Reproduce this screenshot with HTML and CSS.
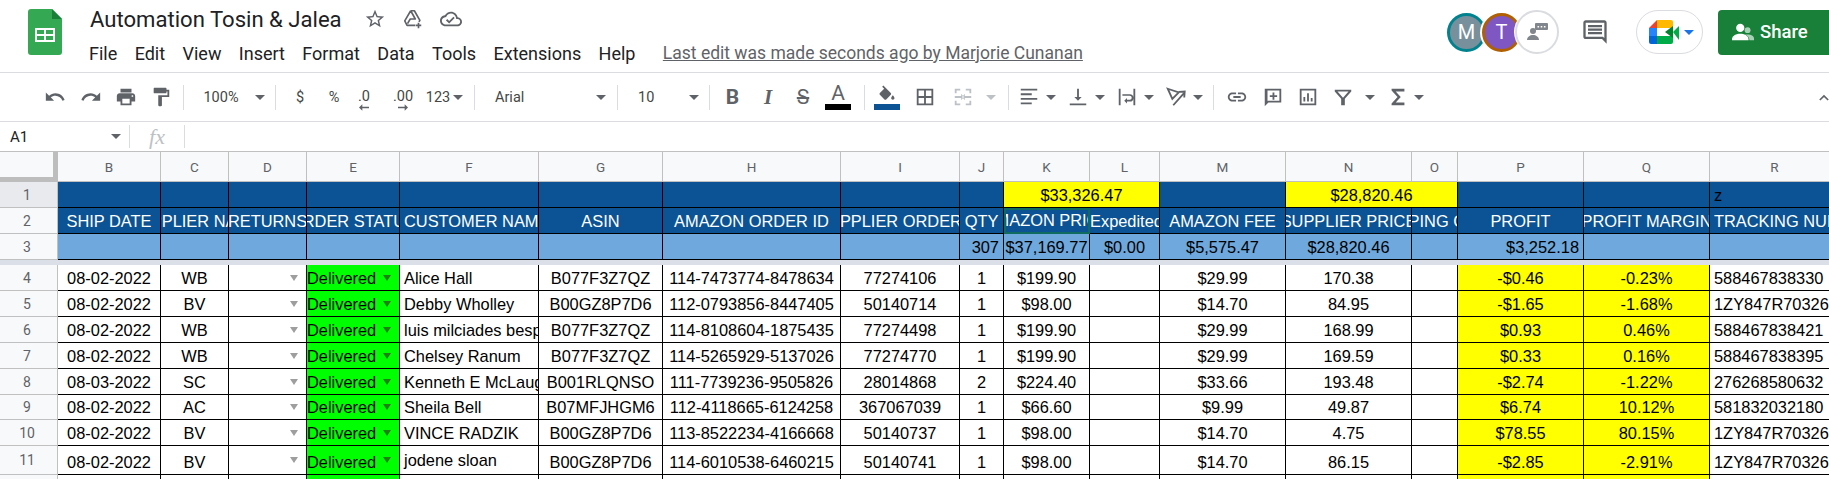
FILE: index.html
```html
<!DOCTYPE html>
<html lang="en">
<head>
<meta charset="utf-8">
<title>Automation Tosin &amp; Jalea</title>
<link rel="stylesheet" href="styles.css">
</head>
<body>
<header class="topbar">
  <svg class="logo" viewBox="0 0 34 46"><path d="M3 0h21l10 10v33a3 3 0 0 1-3 3H3a3 3 0 0 1-3-3V3a3 3 0 0 1 3-3z" fill="#34a853"/><path d="M24 0l10 10H24z" fill="#188038"/><path d="M7 19h20v14H7zM9 21v4h7v-4zm9 0v4h7v-4zM9 27v4h7v-4zm9 0v4h7v-4z" fill="#fff" fill-rule="evenodd"/></svg>
  <div class="doc">
    <div class="titlerow">
      <span class="title">Automation Tosin &amp; Jalea</span>
      <svg class="ti star" viewBox="0 0 24 24"><path d="M22 9.24l-7.19-.62L12 2 9.19 8.63 2 9.24l5.46 4.73L5.82 21 12 17.27 18.18 21l-1.63-7.03L22 9.24zM12 15.4l-3.76 2.27 1-4.28-3.32-2.88 4.38-.38L12 6.1l1.71 4.04 4.38.38-3.32 2.88 1 4.28L12 15.4z"/></svg>
      <svg class="ti drive" viewBox="0 0 24 24"><path d="M9.500 3h4l6 10.500-1 1.700M9.500 3L3 14l2.500 5h9M9.500 3l5 9H9l-3 5" fill="none" stroke="#5f6368" stroke-width="1.8" stroke-linejoin="round"/><path d="M18 16v6M15 19h6" fill="none" stroke="#5f6368" stroke-width="1.8"/></svg>
      <svg class="ti cloud" viewBox="0 0 24 24"><path d="M19.35 10.04C18.67 6.59 15.64 4 12 4 9.11 4 6.6 5.64 5.35 8.04 2.34 8.36 0 10.91 0 14c0 3.31 2.69 6 6 6h13c2.76 0 5-2.24 5-5 0-2.64-2.05-4.78-4.65-4.96zM19 18H6c-2.21 0-4-1.79-4-4 0-2.05 1.53-3.76 3.56-3.97l1.07-.11.5-.95C8.08 7.14 9.94 6 12 6c2.62 0 4.88 1.86 5.39 4.43l.3 1.5 1.53.11c1.56.1 2.78 1.41 2.78 2.96 0 1.65-1.35 3-3 3zm-9-3.82l-2.09-2.09L6.5 13.5 10 17l6.01-6.01-1.41-1.41z"/></svg>
    </div>
    <nav class="menu">
      <span>File</span><span>Edit</span><span>View</span><span>Insert</span><span>Format</span><span>Data</span><span>Tools</span><span>Extensions</span><span>Help</span>
      <a class="lastedit">Last edit was made seconds ago by Marjorie Cunanan</a>
    </nav>
  </div>
  <div class="actions">
    <span class="avatar av-m">M</span>
    <span class="avatar av-t">T</span>
    <span class="avatar av-x"><svg viewBox="0 0 24 24" class="av-ic"><circle cx="8" cy="11" r="3" fill="#80868b"/><path d="M2 20c0-3 3-5 6-5s6 2 6 5z" fill="#80868b"/><rect x="10" y="3" width="13" height="7" rx="1" fill="#80868b"/><path d="M12.5 6h1.6v1.4h-1.6zM15.7 6h1.6v1.4h-1.6zM18.9 6h1.6v1.4h-1.6z" fill="#fff"/></svg></span>
    <svg class="chat" viewBox="0 0 24 24"><path d="M21.99 4c0-1.1-.89-2-1.99-2H4c-1.1 0-2 .9-2 2v12c0 1.1.9 2 2 2h14l4 4-.01-18zM20 4v13.17L18.83 16H4V4h16zM6 12h12v2H6zm0-3h12v2H6zm0-3h12v2H6z"/></svg>
    <span class="meet">
      <svg class="meet-ic" viewBox="0 0 30 24"><path d="M8 0L0 8h8z" fill="#ea4335"/><path d="M8 0h14a2 2 0 0 1 2 2v6H8z" fill="#ffba00"/><path d="M0 8h8v8H0z" fill="#2684fc"/><path d="M0 16h8v8H2a2 2 0 0 1-2-2z" fill="#0066da"/><path d="M8 16h16v6a2 2 0 0 1-2 2H8z" fill="#00ac47"/><path d="M24 12l6-6v14z" fill="#00ac47"/><path d="M16 12l8-6v12z" fill="#00832d"/></svg>
      <i class="meet-arrow"></i>
    </span>
    <span class="share"><svg class="share-ic" viewBox="0 0 24 24"><circle cx="9" cy="7.5" r="4.5" fill="#fff"/><path d="M0 20c0-4 5-6 9-6s9 2 9 6v1H0z" fill="#fff"/><circle cx="17" cy="10" r="3.2" fill="#a6d3b4"/><path d="M14 15c4-1 10 0 10 4v2h-5c0-3-2-5-5-6z" fill="#a6d3b4"/></svg>Share</span>
  </div>
</header>

<div class="toolbar">
  <span class="tb w36"><svg class="ic" viewBox="0 0 24 24"><path d="M12.5 8c-2.65 0-5.05.99-6.9 2.6L2 7v9h9l-3.62-3.62c1.39-1.16 3.16-1.88 5.12-1.88 3.54 0 6.55 2.31 7.6 5.5l2.37-.78C21.08 11.03 17.15 8 12.5 8z"/></svg></span>
  <span class="tb w35"><svg class="ic" viewBox="0 0 24 24"><path d="M18.4 10.6C16.55 8.99 14.15 8 11.5 8c-4.65 0-8.58 3.03-9.96 7.22L3.9 16c1.05-3.19 4.05-5.5 7.6-5.5 1.95 0 3.73.72 5.12 1.88L13 16h9V7l-3.6 3.6z"/></svg></span>
  <span class="tb w35"><svg class="ic" viewBox="0 0 24 24"><path d="M19 8H5c-1.66 0-3 1.34-3 3v6h4v4h12v-4h4v-6c0-1.66-1.34-3-3-3zm-3 11H8v-5h8v5zm3-7c-.55 0-1-.45-1-1s.45-1 1-1 1 .45 1 1-.45 1-1 1zm-1-9H6v4h12V3z"/></svg></span>
  <span class="tb w36"><svg class="ic" viewBox="0 0 24 24"><path d="M18 4V3c0-.55-.45-1-1-1H5c-.55 0-1 .45-1 1v4c0 .55.45 1 1 1h12c.55 0 1-.45 1-1V6h1v4H9v11c0 .55.45 1 1 1h2c.55 0 1-.45 1-1v-9h8V4h-3z"/></svg></span>
  <span class="tb w9"><i class="sep"></i></span>
  <span class="tb w66 txt">100%</span>
  <span class="tb w12"><i class="arrow"></i></span>
  <span class="tb w18"><i class="sep"></i></span>
  <span class="tb w32 txt">$</span>
  <span class="tb w36 txt pct">%</span>
  <span class="tb w24 dec"><span class="txt dectxt">.0</span><svg class="decarrow" viewBox="0 0 12 8"><path d="M12 3H4V0L0 4l4 4V5h8z"/></svg></span>
  <span class="tb w54 dec"><span class="txt dectxt">.00</span><svg class="decarrow" viewBox="0 0 12 8"><path d="M0 3h8V0l4 4-4 4V5H0z"/></svg></span>
  <span class="tb w16 txt">123</span>
  <span class="tb w24"><i class="arrow"></i></span>
  <span class="tb w9"><i class="sep"></i></span>
  <span class="tb w110 txt left">Arial</span>
  <span class="tb w24"><i class="arrow"></i></span>
  <span class="tb w9"><i class="sep"></i></span>
  <span class="tb w60 txt left">10</span>
  <span class="tb w23"><i class="arrow"></i></span>
  <span class="tb w9"><i class="sep"></i></span>
  <span class="tb w37 glyph bold">B</span>
  <span class="tb w34 glyph ital">I</span>
  <span class="tb w36 glyph strike">S</span>
  <span class="tb w34 colorbtn"><span class="glyph colorA">A</span><i class="bar bar-black"></i></span>
  <span class="tb w18"><i class="sep"></i></span>
  <span class="tb w28 colorbtn"><svg class="ic fill" viewBox="0 0 24 19"><path d="M16.56 8.94L7.62 0 6.21 1.41l2.38 2.38-5.15 5.15c-.59.59-.59 1.54 0 2.12l5.5 5.5c.29.29.68.44 1.06.44s.77-.15 1.06-.44l5.5-5.5c.59-.58.59-1.53 0-2.12zM19 11.5s-2 2.17-2 3.5c0 1.1.9 2 2 2s2-.9 2-2c0-1.33-2-3.5-2-3.5z"/></svg><i class="bar bar-blue"></i></span>
  <span class="tb w47"><svg class="ic" viewBox="0 0 24 24"><path d="M3 3h18v18H3zM5 5v6h6V5zm8 0v6h6V5zM5 13v6h6v-6zm8 0v6h6v-6z" fill-rule="evenodd"/></svg></span>
  <span class="tb w30"><svg class="ic off" viewBox="0 0 24 24"><path d="M3 3h6v2H5v3H3zM15 3h6v5h-2V5h-4zM3 16h2v3h4v2H3zM19 16h2v5h-6v-2h4zM3 11h7V8.500l3 3.500-3 3.500V13H3zM21 11h-7V8.500L11 12l3 3.500V13h7z"/></svg></span>
  <span class="tb w25"><i class="arrow arrow-off"></i></span>
  <span class="tb w10"><i class="sep"></i></span>
  <span class="tbgroup"><svg class="ic" viewBox="0 0 24 24"><path d="M3 3h18v2H3zM3 8h12v2H3zM3 13h18v2H3zM3 18h12v2H3z"/></svg><i class="arrow"></i></span>
  <span class="tbgroup"><svg class="ic" viewBox="0 0 24 24"><path d="M3 19h18v2H3zM11 3h2v9h3l-4 4-4-4h3z"/></svg><i class="arrow"></i></span>
  <span class="tbgroup"><svg class="ic" viewBox="0 0 24 24"><path d="M3 3h2v18H3zM19 3h2v18h-2zM7 9h8a2.500 2.500 0 0 1 0 8h-3v2l-3-3 3-3v2h3a.8.8 0 0 0 0-4.300H7z"/></svg><i class="arrow"></i></span>
  <span class="tbgroup"><svg class="ic stroked" viewBox="0 0 24 24"><path d="M3 3l12 4-7 7zM9 21L20.500 8M15 6.500l6.500-.5-.5 6.500"/></svg><i class="arrow"></i></span>
  <span class="tb w9"><i class="sep"></i></span>
  <span class="tb w37"><svg class="ic" viewBox="0 0 24 24"><path d="M3.900 12c0-1.710 1.390-3.100 3.100-3.100h4V7H7c-2.760 0-5 2.240-5 5s2.240 5 5 5h4v-1.900H7c-1.710 0-3.100-1.390-3.100-3.100zM8 13h8v-2H8v2zm9-6h-4v1.900h4c1.710 0 3.100 1.390 3.100 3.100s-1.390 3.100-3.100 3.100h-4V17h4c2.760 0 5-2.240 5-5s-2.240-5-5-5z"/></svg></span>
  <span class="tb w35"><svg class="ic" viewBox="0 0 24 24"><path d="M4 3h17v15H7l-4 4V3zm2 2v12.200L6.200 16H19V5zM11.500 7h2v3h3v2h-3v3h-2v-3h-3v-2h3z" fill-rule="evenodd"/></svg></span>
  <span class="tb w35"><svg class="ic" viewBox="0 0 24 24"><path d="M3 3h18v18H3zM5 5v14h14V5zM7 12h2v5H7zM11 8h2v9h-2zM15 13h2v4h-2z" fill-rule="evenodd"/></svg></span>
  <span class="tb w36"><svg class="ic" viewBox="0 0 24 24"><path d="M3 4h18v2l-7 8v7h-4v-7L3 6zm3 2l6 6.800L18 6z" fill-rule="evenodd"/></svg></span>
  <span class="tb w18"><i class="arrow"></i></span>
  <span class="tb w38"><svg class="ic" viewBox="0 0 24 24"><path d="M5 3h14v3H9.500l5.500 6-5.500 6H19v3H5v-2l6.500-7L5 5z"/></svg></span>
  <span class="tb w4"><i class="arrow"></i></span>
  <svg class="collapse" viewBox="0 0 12 8"><path d="M1 7l5-5 5 5" fill="none" stroke="#5f6368" stroke-width="2"/></svg>
</div>

<div class="formula">
  <span class="namebox">A1</span>
  <span class="fb-arrow"><i class="arrow"></i></span>
  <i class="fsep"></i>
  <span class="fx">fx</span>
  <i class="fsep"></i>
</div>

<div class="sheet">
  <div class="corner"></div>
  <div class="ch">B</div><div class="ch">C</div><div class="ch">D</div><div class="ch">E</div><div class="ch">F</div><div class="ch">G</div><div class="ch">H</div><div class="ch">I</div><div class="ch">J</div><div class="ch">K</div><div class="ch">L</div><div class="ch">M</div><div class="ch">N</div><div class="ch">O</div><div class="ch">P</div><div class="ch">Q</div><div class="ch">R</div>

  <div class="rh rh-sel">1</div>
  <div class="c navy"></div><div class="c navy"></div><div class="c navy"></div><div class="c navy"></div><div class="c navy"></div><div class="c navy"></div><div class="c navy"></div><div class="c navy"></div><div class="c navy"></div>
  <div class="c yel mid vmid span2">$33,326.47</div>
  <div class="c navy"></div>
  <div class="c yel mid vmid span2">$28,820.46</div>
  <div class="c navy"></div><div class="c navy"></div>
  <div class="c navy dark">z</div>

  <div class="rh">2</div>
  <div class="c navy mid">SHIP DATE</div><div class="c navy mid">SUPPLIER NAME</div><div class="c navy mid">RETURNS</div><div class="c navy mid">ORDER STATUS</div><div class="c navy">CUSTOMER NAME</div><div class="c navy mid">ASIN</div><div class="c navy mid">AMAZON ORDER ID</div><div class="c navy mid">SUPPLIER ORDER ID</div><div class="c navy mid">QTY</div><div class="c navy mid selected">AMAZON PRICE</div><div class="c navy flush">Expedited Shipping</div><div class="c navy mid">AMAZON FEE</div><div class="c navy mid">SUPPLIER PRICE</div><div class="c navy mid">SHIPPING COST</div><div class="c navy mid">PROFIT</div><div class="c navy mid">PROFIT MARGIN</div><div class="c navy">TRACKING NUMBER</div>

  <div class="rh">3</div>
  <div class="c sky"></div><div class="c sky"></div><div class="c sky"></div><div class="c sky"></div><div class="c sky"></div><div class="c sky"></div><div class="c sky"></div><div class="c sky"></div>
  <div class="c sky end">307</div><div class="c sky mid">$37,169.77</div><div class="c sky mid">$0.00</div><div class="c sky mid">$5,575.47</div><div class="c sky mid">$28,820.46</div><div class="c sky"></div><div class="c sky end">$3,252.18</div><div class="c sky"></div><div class="c sky"></div>

  <div class="band"></div>

  <div class="rh">4</div>
  <div class="c mid">08-02-2022</div><div class="c mid">WB</div><div class="c dd"><i class="caret"></i></div><div class="c st">Delivered<i class="caret caret-g"></i></div><div class="c">Alice Hall</div><div class="c mid">B077F3Z7QZ</div><div class="c mid">114-7473774-8478634</div><div class="c mid">77274106</div><div class="c mid">1</div><div class="c mid">$199.90</div><div class="c"></div><div class="c mid">$29.99</div><div class="c mid">170.38</div><div class="c"></div><div class="c yel mid">-$0.46</div><div class="c yel mid">-0.23%</div><div class="c">588467838330</div>

  <div class="rh">5</div>
  <div class="c mid">08-02-2022</div><div class="c mid">BV</div><div class="c dd"><i class="caret"></i></div><div class="c st">Delivered<i class="caret caret-g"></i></div><div class="c">Debby Wholley</div><div class="c mid">B00GZ8P7D6</div><div class="c mid">112-0793856-8447405</div><div class="c mid">50140714</div><div class="c mid">1</div><div class="c mid">$98.00</div><div class="c"></div><div class="c mid">$14.70</div><div class="c mid">84.95</div><div class="c"></div><div class="c yel mid">-$1.65</div><div class="c yel mid">-1.68%</div><div class="c">1ZY847R7032657</div>

  <div class="rh">6</div>
  <div class="c mid">08-02-2022</div><div class="c mid">WB</div><div class="c dd"><i class="caret"></i></div><div class="c st">Delivered<i class="caret caret-g"></i></div><div class="c">luis milciades bespin</div><div class="c mid">B077F3Z7QZ</div><div class="c mid">114-8108604-1875435</div><div class="c mid">77274498</div><div class="c mid">1</div><div class="c mid">$199.90</div><div class="c"></div><div class="c mid">$29.99</div><div class="c mid">168.99</div><div class="c"></div><div class="c yel mid">$0.93</div><div class="c yel mid">0.46%</div><div class="c">588467838421</div>

  <div class="rh">7</div>
  <div class="c mid">08-02-2022</div><div class="c mid">WB</div><div class="c dd"><i class="caret"></i></div><div class="c st">Delivered<i class="caret caret-g"></i></div><div class="c">Chelsey Ranum</div><div class="c mid">B077F3Z7QZ</div><div class="c mid">114-5265929-5137026</div><div class="c mid">77274770</div><div class="c mid">1</div><div class="c mid">$199.90</div><div class="c"></div><div class="c mid">$29.99</div><div class="c mid">169.59</div><div class="c"></div><div class="c yel mid">$0.33</div><div class="c yel mid">0.16%</div><div class="c">588467838395</div>

  <div class="rh">8</div>
  <div class="c mid">08-03-2022</div><div class="c mid">SC</div><div class="c dd"><i class="caret"></i></div><div class="c st">Delivered<i class="caret caret-g"></i></div><div class="c">Kenneth E McLaughlin</div><div class="c mid">B001RLQNSO</div><div class="c mid">111-7739236-9505826</div><div class="c mid">28014868</div><div class="c mid">2</div><div class="c mid">$224.40</div><div class="c"></div><div class="c mid">$33.66</div><div class="c mid">193.48</div><div class="c"></div><div class="c yel mid">-$2.74</div><div class="c yel mid">-1.22%</div><div class="c">276268580632</div>

  <div class="rh">9</div>
  <div class="c mid">08-02-2022</div><div class="c mid">AC</div><div class="c dd"><i class="caret"></i></div><div class="c st">Delivered<i class="caret caret-g"></i></div><div class="c">Sheila Bell</div><div class="c mid">B07MFJHGM6</div><div class="c mid">112-4118665-6124258</div><div class="c mid">367067039</div><div class="c mid">1</div><div class="c mid">$66.60</div><div class="c"></div><div class="c mid">$9.99</div><div class="c mid">49.87</div><div class="c"></div><div class="c yel mid">$6.74</div><div class="c yel mid">10.12%</div><div class="c">581832032180</div>

  <div class="rh">10</div>
  <div class="c mid">08-02-2022</div><div class="c mid">BV</div><div class="c dd"><i class="caret"></i></div><div class="c st">Delivered<i class="caret caret-g"></i></div><div class="c">VINCE RADZIK</div><div class="c mid">B00GZ8P7D6</div><div class="c mid">113-8522234-4166668</div><div class="c mid">50140737</div><div class="c mid">1</div><div class="c mid">$98.00</div><div class="c"></div><div class="c mid">$14.70</div><div class="c mid">4.75</div><div class="c"></div><div class="c yel mid">$78.55</div><div class="c yel mid">80.15%</div><div class="c">1ZY847R7032657</div>

  <div class="rh">11</div>
  <div class="c mid">08-02-2022</div><div class="c mid">BV</div><div class="c dd"><i class="caret"></i></div><div class="c st">Delivered<i class="caret caret-g"></i></div><div class="c vmid">jodene sloan</div><div class="c mid">B00GZ8P7D6</div><div class="c mid">114-6010538-6460215</div><div class="c mid">50140741</div><div class="c mid">1</div><div class="c mid">$98.00</div><div class="c"></div><div class="c mid">$14.70</div><div class="c mid">86.15</div><div class="c"></div><div class="c yel mid">-$2.85</div><div class="c yel mid">-2.91%</div><div class="c">1ZY847R7032657</div>

  <div class="rh"></div>
  <div class="c"></div><div class="c"></div><div class="c"></div><div class="c st"></div><div class="c"></div><div class="c"></div><div class="c"></div><div class="c"></div><div class="c"></div><div class="c"></div><div class="c"></div><div class="c"></div><div class="c"></div><div class="c"></div><div class="c yel"></div><div class="c yel"></div><div class="c"></div>
</div>
</body>
</html>
```

FILE: styles.css
```css
* { box-sizing: border-box; }
html, body { margin: 0; height: 479px; overflow: hidden; background: #fff; }
body { font-family: Roboto, "Liberation Sans", sans-serif; color: #202124; width: 1829px; }
i { display: block; }

/* top bar */
.topbar { display: flex; height: 73px; border-bottom: 1px solid #dadce0; align-items: flex-start; }
.logo { width: 34px; height: 46px; margin: 9px 0 0 28px; flex: none; }
.doc { margin-left: 28px; padding-top: 4px; }
.titlerow { display: flex; align-items: center; height: 30px; }
.title { font-size: 22.1px; color: #202124; width: 274px; white-space: nowrap; }
.ti { width: 22px; height: 22px; fill: #5f6368; flex: none; }
.drive { margin-left: 16px; }
.cloud { margin-left: 16px; }
.menu { display: flex; align-items: center; height: 24px; margin-top: 7px; font-size: 18px; gap: 17.4px; white-space: nowrap; color: #202124; margin-left: -1px; }
.lastedit { color: #5f6368; text-decoration: underline; font-size: 17.5px; margin-left: 10px; }

.actions { margin-left: auto; display: flex; align-items: center; height: 44px; margin-top: 10px; }
.avatar { width: 39px; height: 39px; border-radius: 50%; color: #fff; font-size: 20px; display: flex; align-items: center; justify-content: center; flex: none; }
.av-m { background: #78909c; border: 3px solid #00838f; }
.av-t { background: #7e57c2; border: 3px solid #b06000; margin-left: -4px; box-shadow: 0 0 0 2px #fff; }
.av-x { width: 44px; height: 44px; margin-left: -6px; background: #fff; border: 2px solid #dadce0; box-shadow: 0 0 0 1px #fff; position: relative; }
.av-ic { width: 24px; height: 24px; }
.chat { width: 28px; height: 28px; fill: #5f6368; margin-left: 22px; flex: none; }
.meet { width: 67px; height: 44px; border: 1px solid #dadce0; border-radius: 22px; margin-left: 27px; display: flex; align-items: center; padding-left: 12px; flex: none; }
.meet-ic { width: 30px; height: 24px; }
.meet-arrow { margin-left: 5px; width: 0; height: 0; border: 5px solid transparent; border-top: 5px solid #1a73e8; border-bottom: 0; }
.share { width: 111px; height: 45px; margin-left: 15px; background: #188038; border-radius: 4px 0 0 4px; color: #fff; font-size: 18.5px; font-weight: 500; display: flex; align-items: center; padding-left: 14px; gap: 6px; flex: none; }
.share-ic { width: 22px; height: 22px; }

/* toolbar */
.toolbar { display: flex; align-items: center; height: 49px; padding-left: 37px; border-bottom: 1px solid #dadce0; }
.tb { display: flex; align-items: center; justify-content: center; height: 40px; flex: none; white-space: nowrap; position: relative; }
.w4 { width: 4px; } .w9 { width: 9px; } .w10 { width: 10px; } .w12 { width: 12px; } .w16 { width: 16px; } .w18 { width: 18px; }
.w23 { width: 23px; } .w24 { width: 24px; } .w25 { width: 25px; } .w28 { width: 28px; } .w30 { width: 30px; } .w32 { width: 32px; }
.w34 { width: 34px; } .w35 { width: 35px; } .w36 { width: 36px; } .w37 { width: 37px; } .w38 { width: 38px; } .w47 { width: 47px; }
.w54 { width: 54px; } .w60 { width: 60px; } .w66 { width: 66px; } .w110 { width: 110px; }
.ic { width: 22px; height: 22px; fill: #5f6368; flex: none; }
.ic.off { fill: #bdc1c6; }
.ic.stroked { fill: none; stroke: #5f6368; stroke-width: 2; }
.txt { font-size: 14.5px; color: #444746; }
.left { justify-content: flex-start; padding-left: 16px; }
.sep { width: 1px; height: 25px; background: #dadce0; flex: none; }
.arrow { width: 0; height: 0; flex: none; border: 5px solid transparent; border-top: 5px solid #5f6368; border-bottom: 0; }
.arrow-off { border-top-color: #bdc1c6; }
.dec { flex-direction: column; justify-content: flex-start; padding-top: 12px; }
.dectxt { line-height: 16px; }
.decarrow { width: 10px; height: 7px; fill: #5f6368; margin-top: -1px; flex: none; }
.glyph { font-size: 21px; color: #5f6368; line-height: 22px; }
.bold { font-weight: 700; }
.ital { font-style: italic; font-weight: 700; font-family: "Liberation Serif", serif; }
.strike { text-decoration: line-through; }
.colorbtn { flex-direction: column; }
.colorA { font-weight: 400; line-height: 18px; }
.ic.fill { width: 20px; height: 17px; }
.bar { width: 26px; height: 6px; margin-top: 2px; flex: none; }
.bar-black { background: #000; }
.bar-blue { background: #0b5394; }
.tbgroup { display: flex; align-items: center; width: 49px; height: 40px; padding-left: 5px; gap: 6px; flex: none; }
.collapse { width: 10px; height: 7px; margin-left: auto; margin-right: 0; flex: none; }

/* formula bar */
.formula { display: flex; align-items: center; height: 30px; border-bottom: 1px solid #c0c0c0; }
.namebox { font-size: 15px; margin-left: 10px; width: 101px; }
.fb-arrow { width: 10px; margin-right: 8px; }
.fsep { width: 1px; height: 23px; background: #dadce0; flex: none; }
.fx { width: 54px; text-align: center; font-family: "Liberation Serif", serif; font-style: italic; font-size: 22px; color: #bdc1c6; }

/* sheet */
.sheet {
  display: grid;
  grid-template-columns: 58px 103px 68px 78px 93px 139px 124px 178px 119px 44px 86px 70px 126px 126px 46px 126px 126px 130px;
  grid-template-rows: 30px 26px 26px 26px 5px 26px 26px 26px 26px 26px 25px 26px 29px 8px;
  font-family: "Liberation Sans", Arial, sans-serif;
  font-size: 16.4px;
  color: #000;
}
.corner { background: #f8f9fa; border-right: 5px solid #bdbdbd; border-bottom: 5px solid #bdbdbd; }
.ch { background: #f8f9fa; border-right: 1px solid #c0c0c0; border-bottom: 1px solid #c0c0c0; display: flex; align-items: center; justify-content: center; font-family: Roboto, sans-serif; font-size: 13.5px; color: #5f6368; }
.rh { background: #f8f9fa; border-right: 1px solid #c0c0c0; border-bottom: 1px solid #c0c0c0; padding-right: 3px; display: flex; align-items: center; justify-content: center; font-family: Roboto, sans-serif; font-size: 14px; color: #5f6368; }
.rh-sel { background: #e8eaed; }
.band { grid-column: 1 / -1; background: #dadfe8; }
.c { border-right: 1px solid #000; border-bottom: 1px solid #000; padding: 0 4px; display: flex; align-items: flex-end; line-height: 24px; overflow: hidden; white-space: nowrap; min-width: 0; background: #fff; }
.mid { justify-content: center; }
.end { justify-content: flex-end; }
.vmid { align-items: center; }
.flush { padding: 0; }
.span2 { grid-column: span 2; }
.navy { background: #0b5394; color: #fff; }
.dark { color: #000; }
.sky { background: #6fa8dc; }
.yel { background: #ffff00; }
.st { background: #00ff00; padding: 0; justify-content: space-between; padding-right: 8px; }
.dd { justify-content: flex-end; padding-right: 8px; }
.caret { width: 0; height: 0; flex: none; align-self: center; border: 4.5px solid transparent; border-top: 6px solid #9e9e9e; border-bottom: 0; }
.caret-g { border-top-color: #1f7f14; }
.selected { border: 2px solid #0f6b60; padding: 0; }
```
